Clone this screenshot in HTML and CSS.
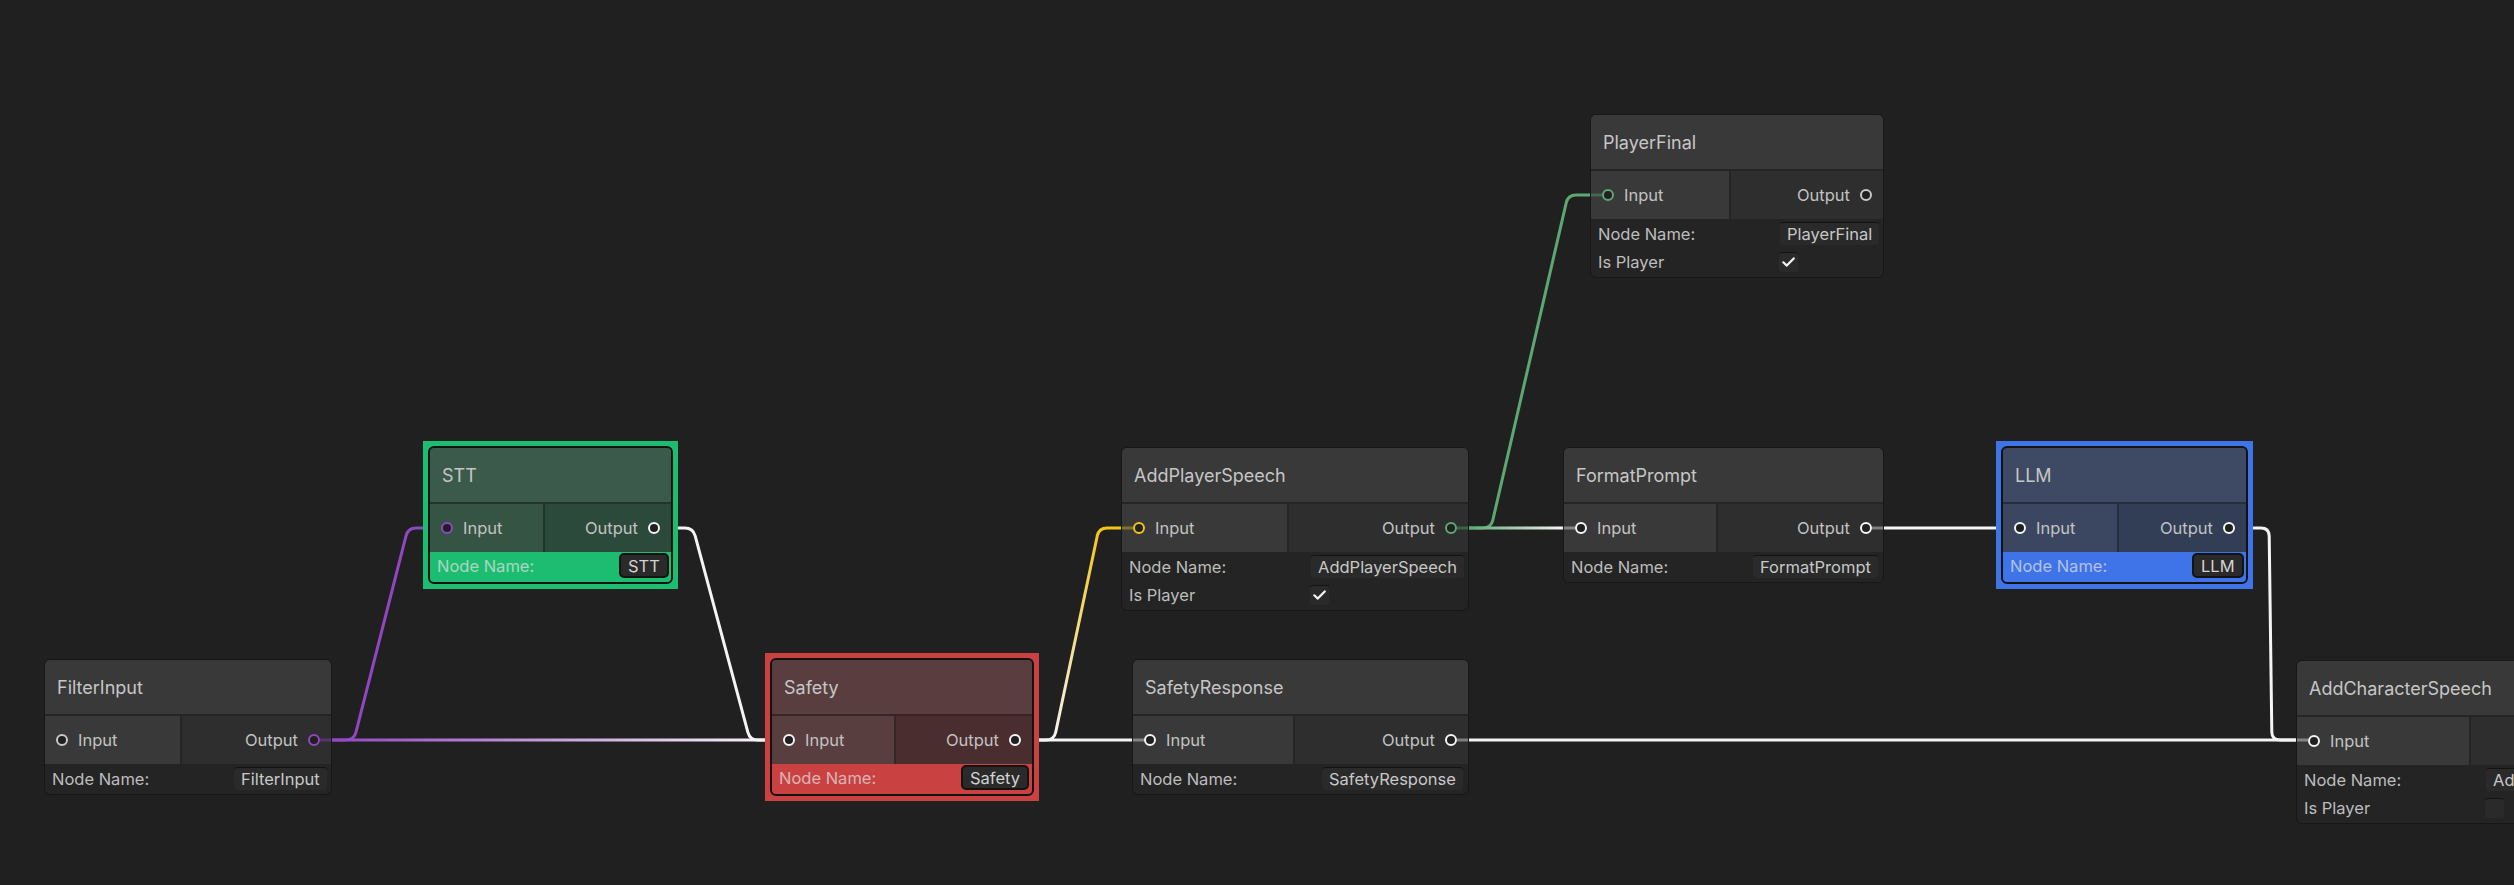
FILE: index.html
```html
<!DOCTYPE html>
<html>
<head>
<meta charset="utf-8">
<title>Graph</title>
<link rel="stylesheet" href="styles.css">
</head>
<body>
<div class="canvas">

  <div class="node n-filter">
    <div class="title">FilterInput</div>
    <div class="ports">
      <div class="port in"><span class="dot c-grey"></span><span class="lbl">Input</span></div>
      <div class="port out"><span class="lbl">Output</span><span class="dot c-purple"></span></div>
    </div>
    <div class="fields">
      <div class="row"><span class="label">Node Name:</span><span class="field">FilterInput</span></div>
    </div>
  </div>

  <div class="frame f-stt">
    <div class="node sel">
      <div class="title">STT</div>
      <div class="ports">
        <div class="port in"><span class="dot c-purple"></span><span class="lbl">Input</span></div>
        <div class="port out"><span class="lbl">Output</span><span class="dot c-white"></span></div>
      </div>
      <div class="fields">
        <div class="row"><span class="label">Node Name:</span><span class="field">STT</span></div>
      </div>
    </div>
  </div>

  <div class="frame f-safety">
    <div class="node sel">
      <div class="title">Safety</div>
      <div class="ports">
        <div class="port in"><span class="dot c-white"></span><span class="lbl">Input</span></div>
        <div class="port out"><span class="lbl">Output</span><span class="dot c-white"></span></div>
      </div>
      <div class="fields">
        <div class="row"><span class="label">Node Name:</span><span class="field">Safety</span></div>
      </div>
    </div>
  </div>

  <div class="node n-aps tall">
    <div class="title">AddPlayerSpeech</div>
    <div class="ports">
      <div class="port in"><span class="dot c-yellow"></span><span class="lbl">Input</span></div>
      <div class="port out"><span class="lbl">Output</span><span class="dot c-green"></span></div>
    </div>
    <div class="fields">
      <div class="row"><span class="label">Node Name:</span><span class="field">AddPlayerSpeech</span></div>
      <div class="row row-check"><span class="label">Is Player</span><span class="check"><svg width="13" height="10" viewBox="0 0 13 10"><polyline points="1.3,5.3 4.8,8.6 11.7,1.4" fill="none" stroke="#f2f2f2" stroke-width="2.2" stroke-linecap="round" stroke-linejoin="round"/></svg></span></div>
    </div>
  </div>

  <div class="node n-sresp">
    <div class="title">SafetyResponse</div>
    <div class="ports">
      <div class="port in"><span class="dot c-white"></span><span class="lbl">Input</span></div>
      <div class="port out"><span class="lbl">Output</span><span class="dot c-white"></span></div>
    </div>
    <div class="fields">
      <div class="row"><span class="label">Node Name:</span><span class="field">SafetyResponse</span></div>
    </div>
  </div>

  <div class="node n-pfinal tall">
    <div class="title">PlayerFinal</div>
    <div class="ports">
      <div class="port in"><span class="dot c-green"></span><span class="lbl">Input</span></div>
      <div class="port out"><span class="lbl">Output</span><span class="dot c-grey"></span></div>
    </div>
    <div class="fields">
      <div class="row"><span class="label">Node Name:</span><span class="field">PlayerFinal</span></div>
      <div class="row row-check"><span class="label">Is Player</span><span class="check"><svg width="13" height="10" viewBox="0 0 13 10"><polyline points="1.3,5.3 4.8,8.6 11.7,1.4" fill="none" stroke="#f2f2f2" stroke-width="2.2" stroke-linecap="round" stroke-linejoin="round"/></svg></span></div>
    </div>
  </div>

  <div class="node n-fmt">
    <div class="title">FormatPrompt</div>
    <div class="ports">
      <div class="port in"><span class="dot c-white"></span><span class="lbl">Input</span></div>
      <div class="port out"><span class="lbl">Output</span><span class="dot c-white"></span></div>
    </div>
    <div class="fields">
      <div class="row"><span class="label">Node Name:</span><span class="field">FormatPrompt</span></div>
    </div>
  </div>

  <div class="frame f-llm">
    <div class="node sel">
      <div class="title">LLM</div>
      <div class="ports">
        <div class="port in"><span class="dot c-white"></span><span class="lbl">Input</span></div>
        <div class="port out"><span class="lbl">Output</span><span class="dot c-white"></span></div>
      </div>
      <div class="fields">
        <div class="row"><span class="label">Node Name:</span><span class="field">LLM</span></div>
      </div>
    </div>
  </div>

  <div class="node n-acs tall">
    <div class="title">AddCharacterSpeech</div>
    <div class="ports">
      <div class="port in"><span class="dot c-white"></span><span class="lbl">Input</span></div>
      <div class="port out"><span class="lbl">Output</span><span class="dot c-white"></span></div>
    </div>
    <div class="fields">
      <div class="row"><span class="label">Node Name:</span><span class="field">AddCharacterSpeech</span></div>
      <div class="row row-check"><span class="label">Is Player</span><span class="check"></span></div>
    </div>
  </div>

  <svg class="edges" width="2514" height="885" viewBox="0 0 2514 885">
    <defs>
      <linearGradient id="g-pw" gradientUnits="userSpaceOnUse" x1="332" y1="740" x2="765" y2="740">
        <stop offset="0" stop-color="#9246c2"/>
        <stop offset="1" stop-color="#f4f4f4"/>
      </linearGradient>
      <linearGradient id="g-wy" gradientUnits="userSpaceOnUse" x1="1050" y1="740" x2="1110" y2="528">
        <stop offset="0" stop-color="#f4f4f4"/>
        <stop offset="1" stop-color="#f4c414"/>
      </linearGradient>
      <linearGradient id="g-gw" gradientUnits="userSpaceOnUse" x1="1469" y1="528" x2="1563" y2="528">
        <stop offset="0" stop-color="#5ca873"/>
        <stop offset="1" stop-color="#f4f4f4"/>
      </linearGradient>
    </defs>
    <g fill="none" stroke-width="3" stroke-linecap="butt">
      <path d="M332,740 H346 Q354,740 356,732.2 L406,535.8 Q408,528 416,528 H423" stroke="#9246c2"/>
      <path d="M332,740 H765" stroke="url(#g-pw)"/>
      <path d="M678,528 H685 Q693,528 695.1,535.7 L747.9,732.3 Q750,740 758,740 H765" stroke="#f4f4f4"/>
      <path d="M1039,740 H1046 Q1054,740 1055.7,732.2 L1097.3,535.8 Q1099,528 1107,528 H1121" stroke="url(#g-wy)"/>
      <path d="M1039,740 H1132" stroke="#f4f4f4"/>
      <path d="M1469,528 H1483 Q1491,528 1492.8,520.2 L1566.2,202.8 Q1568,195 1576,195 H1590" stroke="#5ca873"/>
      <path d="M1469,528 H1563" stroke="url(#g-gw)"/>
      <path d="M1884,528 H1996" stroke="#f4f4f4"/>
      <path d="M2253,528 H2261 Q2269,528 2269.2,536 L2271.8,732 Q2272,740 2280,740 H2296" stroke="#f4f4f4"/>
      <path d="M1469,740 H2296" stroke="#f4f4f4"/>
    </g>
    <g fill="none" stroke-width="3" opacity="0.4">
      <path d="M320,740 H331" stroke="#9246c2"/>
      <path d="M1122,528 H1133" stroke="#f4c414"/>
      <path d="M1457,528 H1468" stroke="#5ca873"/>
      <path d="M1133,740 H1145" stroke="#f4f4f4"/>
      <path d="M1457,740 H1468" stroke="#f4f4f4"/>
      <path d="M1591,195 H1602" stroke="#5ca873"/>
      <path d="M1564,528 H1575" stroke="#f4f4f4"/>
      <path d="M1872,528 H1883" stroke="#f4f4f4"/>
      <path d="M2297,740 H2308" stroke="#f4f4f4"/>
    </g>
  </svg>

</div>
</body>
</html>
```

FILE: styles.css
```css
* {
  box-sizing: border-box;
}

html,
body {
  margin: 0;
  padding: 0;
  background: #202020;
  overflow: hidden;
}

.canvas {
  position: relative;
  width: 2514px;
  height: 885px;
  overflow: hidden;
  background: #202020;
  font-family: Inter, "Noto Sans", "Liberation Sans", sans-serif;
}

.edges {
  position: absolute;
  left: 0;
  top: 0;
  z-index: 5;
  pointer-events: none;
}

/* ---------- node ---------- */
.node {
  position: absolute;
  display: flex;
  flex-direction: column;
  height: 136px;
  border: 1px solid #171717;
  border-radius: 6px;
  background: #242424;
  overflow: hidden;
}

.node.tall {
  height: 164px;
}

.title {
  flex: none;
  height: 56px;
  display: flex;
  align-items: center;
  padding-left: 12px;
  background: #393939;
  border-bottom: 2px solid #252525;
  color: #c6c6c6;
  font-size: 18px;
  white-space: nowrap;
}

.ports {
  flex: none;
  height: 48px;
  display: flex;
}

.port {
  flex: 1 1 auto;
  display: flex;
  align-items: center;
  gap: 10px;
  color: #c2c2c2;
  font-size: 16.5px;
  white-space: nowrap;
}

.port.in {
  background: #393939;
  padding-left: 11px;
  border-right: 2px solid #252525;
}

.port.out {
  background: #2e2e2e;
  justify-content: flex-end;
  padding-right: 11px;
}

.dot {
  flex: none;
  width: 12px;
  height: 12px;
  border-radius: 50%;
  border: 2.5px solid #f2f2f2;
  background: #202020;
}

.dot.c-grey { border-color: #c8c8c8; }
.dot.c-white { border-color: #f4f4f4; }
.dot.c-purple { border-color: #9246c2; }
.dot.c-yellow { border-color: #f4c414; }
.dot.c-green { border-color: #5ca873; }

.fields {
  flex: 1;
  display: flex;
  flex-direction: column;
  gap: 6px;
  padding: 3px 6px 0 7px;
}

.row {
  display: flex;
  align-items: center;
  height: 23px;
  flex: none;
}

.row-check {
  height: 21px;
}

.label {
  flex: none;
  width: 182px;
  color: #bdbdbd;
  font-size: 16.5px;
  white-space: nowrap;
}

.field {
  flex: none;
  height: 23px;
  display: flex;
  align-items: center;
  padding: 0 7px;
  background: #2a2a2a;
  border-top: 1px solid #131313;
  border-radius: 3px;
  color: #c8c8c8;
  font-size: 16.5px;
  white-space: nowrap;
}

.check {
  flex: none;
  width: 19px;
  height: 20px;
  margin-left: -1px;
  display: flex;
  align-items: center;
  justify-content: center;
  background: #2a2a2a;
  border-top: 1px solid #131313;
  border-radius: 3px;
}

/* ---------- selected frames ---------- */
.frame {
  position: absolute;
  padding: 5px;
}

.frame .node {
  position: static;
  height: 138px;
  border: 2px solid #131313;
}

.frame .node.sel .field {
  height: 25px;
  border: 2px solid #131313;
  border-radius: 5px;
  background: #2a2a2a;
  color: #d2d2d2;
}

.frame .node.sel .fields {
  padding-top: 2px;
}

.frame .node.sel .label {
  color: rgba(225, 225, 225, 0.72);
}

.f-stt {
  left: 423px;
  top: 441px;
  background: #1cbd71;
}
.f-stt .node { width: 245px; }
.f-stt .title { background: #3b5a4b; border-bottom-color: #22352b; }
.f-stt .port.in { background: #365444; border-right-color: #22352b; }
.f-stt .port.out { background: #2c4a3b; }
.f-stt .fields { background: #1cbd71; }

.f-safety {
  left: 765px;
  top: 653px;
  background: #c94141;
}
.f-safety .node { width: 264px; }
.f-safety .title { background: #5a3e3f; border-bottom-color: #362526; }
.f-safety .port.in { background: #583e3f; border-right-color: #362526; }
.f-safety .port.out { background: #4a2e2f; }
.f-safety .fields { background: #c94141; }

.f-llm {
  left: 1996px;
  top: 441px;
  background: #3f74e8;
}
.f-llm .node { width: 247px; }
.f-llm .title { background: #3e4a63; border-bottom-color: #262d3c; }
.f-llm .port.in { background: #3b4760; border-right-color: #262d3c; }
.f-llm .port.out { background: #323d56; }
.f-llm .fields { background: #3f74e8; }

/* ---------- node placement ---------- */
.n-filter { left: 44px; top: 659px; width: 288px; }
.n-aps { left: 1121px; top: 447px; width: 348px; }
.n-sresp { left: 1132px; top: 659px; width: 337px; }
.n-pfinal { left: 1590px; top: 114px; width: 294px; height: 163px; }
.n-fmt { left: 1563px; top: 447px; width: 321px; }
.n-acs { left: 2296px; top: 660px; width: 362px; height: 163px; }
```
